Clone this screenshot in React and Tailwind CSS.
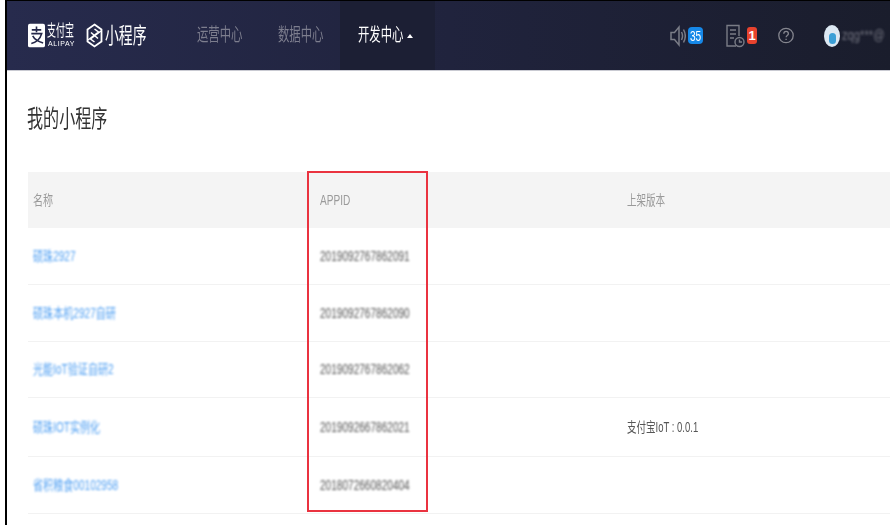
const rows = [
  { name: "硕珠2927", id: "2019092767862091", version: "", h: "h-[57px]" },
  { name: "硕珠本机2927自研", id: "2019092767862090", version: "", h: "h-[57px]" },
  { name: "光能IoT验证自研2", id: "2019092767862062", version: "", h: "h-[56px]" },
  { name: "硕珠IOT实例化", id: "2019092667862021", version: "支付宝IoT : 0.0.1", h: "h-[59px]" },
  { name: "省积粮食00102958", id: "2018072660820404", version: "", h: "h-[57px]" },
];

const cjk = { fontFamily: '"Liberation Sans","Noto Sans CJK SC",sans-serif' };

function Squeeze({ w, cls = "", children }) {
  return (
    <span className={`inline-block overflow-visible whitespace-nowrap ${w}`}>
      <span className={`inline-block origin-left whitespace-nowrap ${cls}`}>{children}</span>
    </span>
  );
}

function AlipayMark() {
  return (
    <svg width="17" height="25" viewBox="0 0 18 25" className="shrink-0">
      <rect x="0" y="0" width="18" height="25" rx="2" fill="#fff" />
      <path d="M4 6.500h10M9 3v6M3.500 10.500h11c-1.500 5-5 9-11 10.500M5 13c2 4 6 6 11 7.500" stroke="#25284a" strokeWidth="1.700" fill="none" />
    </svg>
  );
}

function MiniMark() {
  return (
    <svg width="17" height="25" viewBox="0 0 17 25" className="shrink-0">
      <path d="M8.500 1.500 15.500 6.500V18.500L8.500 23.500 1.500 18.500V6.500Z" stroke="#fff" strokeWidth="1.800" fill="none" />
      <path d="M2 17 12.500 9 8.500 6M15 8 4.500 16 8.500 19M5 9.500 8.500 12.500 12 15.500" stroke="#fff" strokeWidth="1.500" fill="none" />
    </svg>
  );
}

function NavItem({ children, w = "w-[81px]", color = "text-[#7d7e8e]" }) {
  return (
    <span className={`text-[18px] blur-[0.4px] ${color} ${w}`}>
      <Squeeze w="w-full" cls="scale-x-[0.63]">{children}</Squeeze>
    </span>
  );
}

export default function App() {
  return (
    <div className="relative h-[525px] w-[890px] overflow-hidden bg-white pl-[5px]" style={cjk}>
      <div className="h-full border-l-2 border-black">
        <div className="h-[1px] bg-black" />
        <header className="flex h-[70px] items-center border-b border-[#c9cad2] bg-gradient-to-r from-[#272b4d] via-[#20233d] via-50% to-[#1a1d2c] pl-[21px]">
          <div className="flex w-[169px] items-center">
            <AlipayMark />
            <div className="ml-[2px] flex w-[39px] flex-col leading-none text-white blur-[0.3px]">
              <Squeeze w="w-full" cls="scale-x-[0.56] text-[16px] leading-[16px]">支付宝</Squeeze>
              <span className="ml-[1px] mt-[1px] text-[7px] leading-[8px] tracking-[0.600px]">ALIPAY</span>
            </div>
            <MiniMark />
            <span className="ml-[2px] text-[22px] leading-none text-white blur-[0.3px]">
              <Squeeze w="w-[44px]" cls="scale-x-[0.63]">小程序</Squeeze>
            </span>
          </div>
          <NavItem>运营中心</NavItem>
          <NavItem w="w-[62px]">数据中心</NavItem>
          <div className="flex h-full w-[95px] items-center bg-[#1c1f34] pl-[18px] text-[18px] text-white">
            <span className="blur-[0.3px]">
              <Squeeze w="w-[49px]" cls="scale-x-[0.63]">开发中心</Squeeze>
            </span>
            <span className="h-0 w-0 border-x-[3px] border-b-[4px] border-x-transparent border-b-white" />
          </div>
          <div className="ml-auto flex items-center">
            <svg width="16" height="24" viewBox="0 0 16 24" fill="none" stroke="#7a7c86" strokeWidth="1.500">
              <path d="M1 8.500h3.500L9 3V21L4.500 15.500H1Z" />
              <path d="M11.500 8c1.300 2.500 1.300 5.500 0 8M13.500 5.500c2.200 4 2.200 9 0 13" />
            </svg>
            <span className="ml-[2px] flex h-[17px] w-[15px] items-center justify-center rounded-[4px] bg-[#1688e8] text-[14px] leading-none text-white blur-[0.2px]">
              <Squeeze w="w-[12px]" cls="scale-x-[0.72]">35</Squeeze>
            </span>
            <svg width="19" height="24" viewBox="0 0 19 24" fill="none" stroke="#7a7c86" strokeWidth="1.400" className="ml-[23px]">
              <path d="M10 22H1V1.500H13V12" />
              <path d="M4 6h6M4 10h6M4 14h4" />
              <circle cx="13.500" cy="18" r="4.500" />
              <path d="M13.500 15.500V18H16" />
            </svg>
            <span className="ml-[2px] flex h-[17px] w-[10px] items-center justify-center rounded-[3px] bg-[#e8432e] text-[13px] font-bold leading-none text-white">1</span>
            <svg width="16" height="17" viewBox="0 0 16 17" fill="none" stroke="#85868f" strokeWidth="1.300" className="ml-[21px]">
              <circle cx="8" cy="8.500" r="7.200" />
              <path d="M5.800 6.700c0-3 4.600-3 4.600 0 0 1.800-2.300 1.800-2.300 3.600M8.100 11.700v1.400" />
            </svg>
            <div className="ml-[30px] flex h-[22px] w-[16px] flex-col items-center justify-center rounded-[50%] bg-[#dce8f2] blur-[0.7px]">
              <span className="mt-[6px] h-[11px] w-[7px] rounded-full bg-[#3b9fd6]" />
            </div>
            <span className="ml-[2px] w-[48px] overflow-hidden whitespace-nowrap text-[14px] text-[#6f707c] blur-[1px]">
              <Squeeze w="w-[60px]" cls="scale-x-[0.8]">zqg***@</Squeeze>
            </span>
          </div>
        </header>

        <main className="pl-[21px]">
          <h1 className="flex h-[101px] items-start pt-[34px] text-[24px] font-normal leading-[28px] text-[#333] blur-[0.3px]">
            <span className="-ml-[1px]">
              <Squeeze w="w-[90px]" cls="scale-x-[0.67]">我的小程序</Squeeze>
            </span>
          </h1>
          <div className="flex h-[56px] items-center bg-[#f4f4f4] text-[14px] text-[#9a9a9a]">
            <div className="w-[292px] pl-[5px] blur-[0.3px]"><Squeeze w="w-[40px]" cls="scale-x-[0.72]">名称</Squeeze></div>
            <div className="w-[307px] blur-[0.3px]"><Squeeze w="w-[40px]" cls="scale-x-[0.72]">APPID</Squeeze></div>
            <div className="blur-[0.3px]"><Squeeze w="w-[60px]" cls="scale-x-[0.68]">上架版本</Squeeze></div>
          </div>
          {rows.map((r) => (
            <div key={r.id} className={`flex items-center border-b border-[#f2f2f2] ${r.h}`}>
              <div className="w-[292px] pl-[5px] text-[14px] text-[#4f9ff2] blur-[0.9px]">
                <Squeeze w="w-[200px]" cls="scale-x-[0.72]">{r.name}</Squeeze>
              </div>
              <div className="w-[307px] text-[14px] text-[#555] blur-[0.8px]">
                <Squeeze w="w-[110px]" cls="scale-x-[0.72]">{r.id}</Squeeze>
              </div>
              <div className="text-[14px] text-[#555] blur-[0.3px]">
                <Squeeze w="w-[120px]" cls="scale-x-[0.68]">{r.version}</Squeeze>
              </div>
            </div>
          ))}
        </main>
      </div>
      <div className="pointer-events-none absolute left-[307px] top-[171px] h-[341px] w-[121px] border-2 border-[#ea3340]" />
    </div>
  );
}
